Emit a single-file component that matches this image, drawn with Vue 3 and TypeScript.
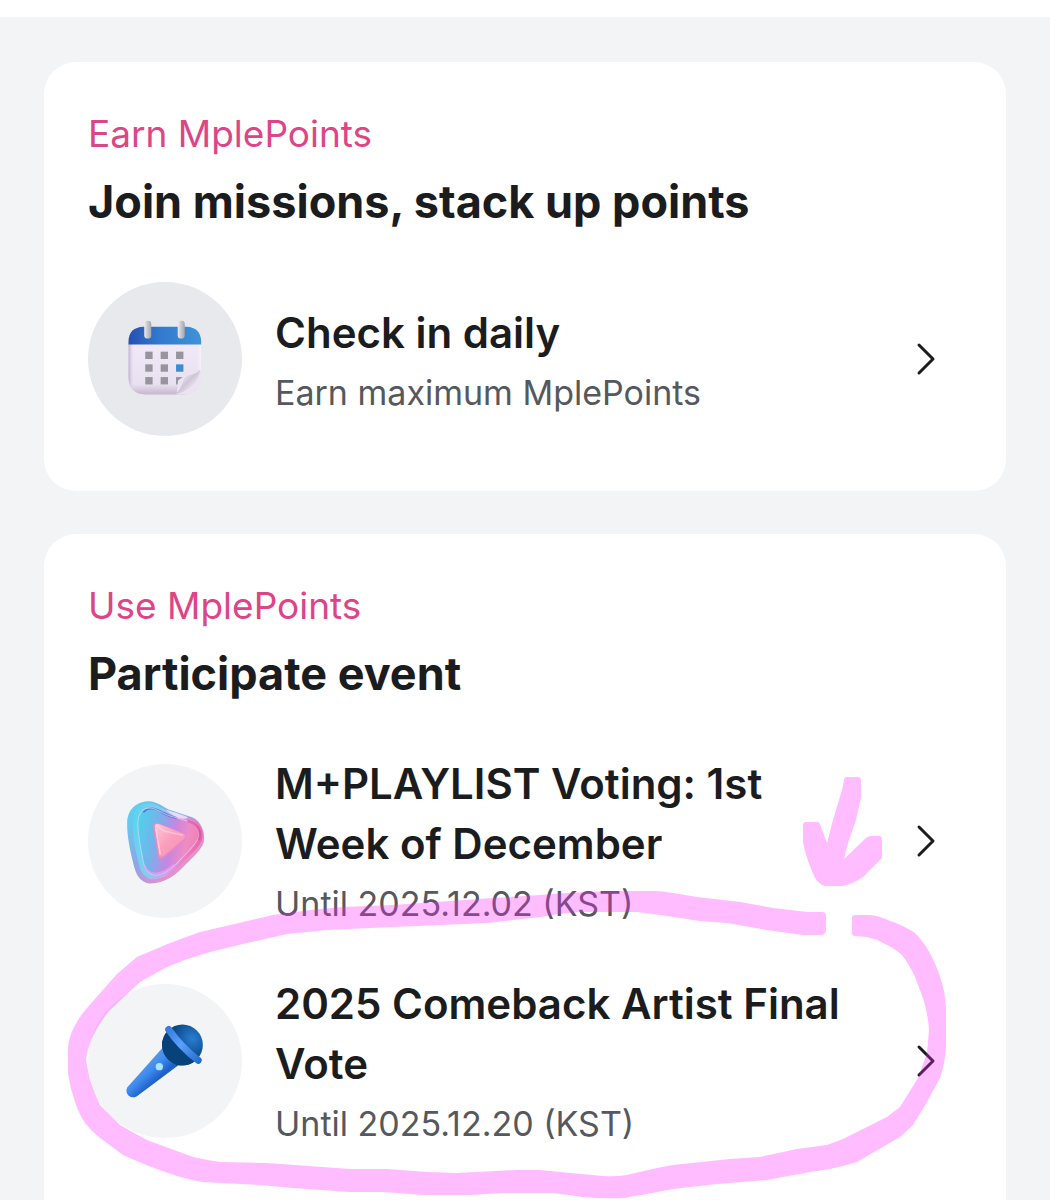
<script setup lang="ts">
type IconName = 'calendar' | 'play' | 'mic'

interface Item {
  icon: IconName
  title: string
  note: string
}

interface Section {
  label: string
  heading: string
  items: Item[]
}

const sections: Section[] = [
  {
    label: 'Earn MplePoints',
    heading: 'Join missions, stack up points',
    items: [{ icon: 'calendar', title: 'Check in daily', note: 'Earn maximum MplePoints' }],
  },
  {
    label: 'Use MplePoints',
    heading: 'Participate event',
    items: [
      { icon: 'play', title: 'M+PLAYLIST Voting: 1st Week of December', note: 'Until 2025.12.02 (KST)' },
      { icon: 'mic', title: '2025 Comeback Artist Final Vote', note: 'Until 2025.12.20 (KST)' },
    ],
  },
]

const columns = [198, 244, 290]
const lines = [244, 282, 320]
</script>

<template>
  <main class="page">
    <section v-for="section in sections" :key="section.label" class="card">
      <p class="label">{{ section.label }}</p>
      <h2 class="heading">{{ section.heading }}</h2>
      <ul class="list">
        <li v-for="item in section.items" :key="item.title">
          <a class="row" href="#">
            <span class="badge" :class="item.icon">
              <svg v-if="item.icon === 'calendar'" viewBox="27 36 460 460" aria-hidden="true">
                <defs>
                  <linearGradient id="cal-top" x1="0" y1="0" x2="1" y2="0">
                    <stop offset="0" stop-color="#2450b4" />
                    <stop offset="0.4" stop-color="#3278cd" />
                    <stop offset="1" stop-color="#3f93d8" />
                  </linearGradient>
                  <linearGradient id="cal-body" x1="0" y1="0" x2="0" y2="1">
                    <stop offset="0" stop-color="#f2e9f8" />
                    <stop offset="0.8" stop-color="#e9e0f0" />
                    <stop offset="1" stop-color="#c5b5cd" />
                  </linearGradient>
                  <linearGradient id="cal-side" x1="0" y1="0" x2="1" y2="0">
                    <stop offset="0" stop-color="#bdb0cc" />
                    <stop offset="0.08" stop-color="#efe6f6" stop-opacity="0" />
                    <stop offset="0.94" stop-color="#efe6f6" stop-opacity="0" />
                    <stop offset="1" stop-color="#f8f4fc" />
                  </linearGradient>
                  <linearGradient id="cal-ring" x1="0" y1="0" x2="1" y2="0">
                    <stop offset="0" stop-color="#eeedf0" />
                    <stop offset="0.45" stop-color="#c9c8cc" />
                    <stop offset="1" stop-color="#a4a5ab" />
                  </linearGradient>
                  <linearGradient id="cal-fold" x1="0" y1="0" x2="1" y2="1">
                    <stop offset="0.2" stop-color="#f2ebf6" />
                    <stop offset="0.5" stop-color="#cfc5d8" />
                    <stop offset="0.75" stop-color="#eee6f3" />
                  </linearGradient>
                </defs>
                <path d="M148 220H364V298L362 326Q360 371 314 372H196Q150 370 148 322Z" fill="url(#cal-body)" />
                <path d="M148 220H364V298L362 326Q360 371 314 372H196Q150 370 148 322Z" fill="url(#cal-side)" />
                <path d="M148 223V212Q150 172 192 170H322Q362 172 365 212V223Z" fill="url(#cal-top)" />
                <rect x="195" y="152" width="21" height="53" rx="10" fill="url(#cal-ring)" />
                <rect x="295" y="152" width="21" height="53" rx="10" fill="url(#cal-ring)" />
                <template v-for="(y, r) in lines" :key="y">
                  <rect
                    v-for="(x, c) in columns"
                    :key="x"
                    :x="x"
                    :y="y"
                    width="22"
                    height="22"
                    :fill="r === 1 && c === 2 ? '#3d8cd0' : '#98949d'"
                  />
                </template>
                <path d="M292 372L296 330L318 314L366 297L364 330Q360 372 316 372Z" fill="#ebe3f1" />
                <path d="M289 371Q304 355 310 336Q314 318 330 314Q352 310 362 297Q358 330 334 350Q312 368 289 371Z" fill="url(#cal-fold)" />
              </svg>

              <svg v-else-if="item.icon === 'play'" viewBox="25 14 460 460" aria-hidden="true">
                <defs>
                  <linearGradient id="play-rim" x1="0" y1="0.35" x2="1" y2="0.6">
                    <stop offset="0" stop-color="#5fd3ee" />
                    <stop offset="0.3" stop-color="#7fcff2" />
                    <stop offset="0.58" stop-color="#d3a2ec" />
                    <stop offset="0.8" stop-color="#f07cbf" />
                    <stop offset="1" stop-color="#ea5f9e" />
                  </linearGradient>
                  <linearGradient id="play-depth" x1="0" y1="0" x2="1" y2="1">
                    <stop offset="0" stop-color="#55d8ee" />
                    <stop offset="0.45" stop-color="#8fa5e8" />
                    <stop offset="0.7" stop-color="#e08fce" />
                    <stop offset="1" stop-color="#f0a3cc" />
                  </linearGradient>
                  <linearGradient id="play-face" x1="0" y1="0.3" x2="1" y2="0.55">
                    <stop offset="0" stop-color="#4fd0ec" />
                    <stop offset="0.3" stop-color="#78b1ea" />
                    <stop offset="0.58" stop-color="#c985e2" />
                    <stop offset="0.8" stop-color="#f08bc4" />
                    <stop offset="1" stop-color="#f17eb2" />
                  </linearGradient>
                  <linearGradient id="play-mark" x1="0" y1="0" x2="1" y2="1">
                    <stop offset="0" stop-color="#ffc7dc" />
                    <stop offset="0.5" stop-color="#fb9dbb" />
                    <stop offset="1" stop-color="#f48fc0" />
                  </linearGradient>
                </defs>
                <path d="M142 190C143 145 174 125 208 125C230 126 248 140 266 150L338 174C363 185 376 220 371 246C365 268 342 289 318 313C285 348 254 372 208 371C180 367 168 346 160 310C150 270 141 225 142 190Z" fill="url(#play-depth)" />
                <path d="M158 190C158 147 183 130 212 132C235 136 248 149 270 157L336 178C360 188 371 213 366 238C358 263 335 280 313 303C278 340 248 361 211 358C185 350 179 325 173 298C164 260 158 222 158 190Z" fill="url(#play-rim)" />
                <path d="M174 193C174 157 192 142 216 146C238 151 254 166 276 171L324 185C349 193 360 215 354 236C345 258 322 276 302 299C273 331 246 350 218 345C196 338 191 314 187 290C180 254 174 222 174 193Z" fill="url(#play-face)" />
                <path d="M190 158C205 140 230 147 250 160C264 168 276 172 290 176" fill="none" stroke="#4c69c7" stroke-width="7" opacity="0.7" />
                <path d="M174 193C174 157 192 142 216 146C238 151 254 166 276 171L324 185C349 193 360 215 354 236C345 258 322 276 302 299C273 331 246 350 218 345C196 338 191 314 187 290C180 254 174 222 174 193Z" fill="none" stroke="#d9dcff" stroke-width="3" opacity="0.65" />
                <path d="M256 150C282 158 307 164 324 174C310 184 280 172 256 150Z" fill="#fff" opacity="0.6" />
                <path d="M322 184C353 193 366 215 356 241" fill="none" stroke="#d94b9d" stroke-width="7" opacity="0.65" />
                <path d="M194 318C206 350 244 348 282 314" fill="none" stroke="#ec9cf2" stroke-width="6" opacity="0.7" />
                <path d="M219 202Q222 187 237 192L309 222Q327 231 314 242L249 296Q238 302 234 288Z" fill="#ec88bb" />
                <path d="M224 199Q226 190 238 194L308 221Q322 229 311 238L251 288Q239 296 237 284Z" fill="url(#play-mark)" />
                <path d="M230 198L252 214L309 227" fill="none" stroke="#ffe2ed" stroke-width="5" opacity="0.5" />
                <path d="M228 206L241 284" stroke="#ffd0e2" stroke-width="4" />
              </svg>

              <svg v-else viewBox="86 45 460 460" aria-hidden="true">
                <defs>
                  <linearGradient id="mic-handle" gradientUnits="userSpaceOnUse" x1="248" y1="290" x2="288" y2="334">
                    <stop offset="0" stop-color="#5799e8" />
                    <stop offset="0.45" stop-color="#3e8bf0" />
                    <stop offset="1" stop-color="#1f61c8" />
                  </linearGradient>
                  <radialGradient id="mic-head" gradientUnits="userSpaceOnUse" cx="398" cy="208" r="78">
                    <stop offset="0" stop-color="#2b7dd0" />
                    <stop offset="0.55" stop-color="#12579f" />
                    <stop offset="1" stop-color="#083768" />
                  </radialGradient>
                  <linearGradient id="mic-band" gradientUnits="userSpaceOnUse" x1="322" y1="177" x2="420" y2="278">
                    <stop offset="0" stop-color="#347bdf" />
                    <stop offset="0.45" stop-color="#5ca0fa" />
                    <stop offset="1" stop-color="#226bce" />
                  </linearGradient>
                </defs>
                <path d="M308 236L356 288L232 380Q218 388 207 378Q197 368 203 354Z" fill="url(#mic-handle)" />
                <circle cx="368" cy="227" r="61" fill="url(#mic-head)" />
                <path d="M322 188Q354 239 408 274Q380 295 349 286Q308 267 307 219Z" fill="#07427b" />
                <path d="M327 181Q362 232 415 273" fill="none" stroke="url(#mic-band)" stroke-width="21" stroke-linecap="round" />
                <circle cx="299" cy="292" r="11" fill="#a9e4ff" />
              </svg>
            </span>

            <span class="text">
              <strong class="title">{{ item.title }}</strong>
              <span class="note">{{ item.note }}</span>
            </span>

            <svg class="chevron" viewBox="0 0 72 36" aria-hidden="true">
              <path d="M29 4L43 18L29 32" />
            </svg>
          </a>
        </li>
      </ul>
    </section>

    <!-- Highlighter marks over the second card -->
    <svg class="marker" viewBox="0 0 1050 1200" aria-hidden="true">
      <path d="M847 777H858Q861 777 861 781V798L856 820L848 843L844 859L866 838Q868 836 871 836H879Q882 836 882 840V858L863 877Q853 884 842 886H825Q820 885 815 878Q807 861 803 843V825Q803 822 806 822H817Q820 822 821 827L827 843L833 820L842 790L844 780Q844 777 847 777Z" />
      <path
        d="M822 912H807L773 908L740 902L697 897L673 893Q663 891 653 891H630Q585 891 540 895L493 898L393 905L343 907L310 910L273 915L200 932L170 943L137 957L117 974L87 1008Q75 1022 70 1037Q68 1043 68 1050V1073Q70 1088 75 1102Q79 1114 85 1123Q92 1132 100 1138L123 1155Q149 1167 177 1176Q190 1180 203 1182L260 1185L293 1188L350 1192H383L423 1195H470L503 1193H553L583 1197Q603 1199 623 1198L647 1194L673 1189L717 1184L767 1180L810 1172L830 1169Q844 1166 857 1162L900 1137L913 1125L927 1102L940 1078Q945 1063 946 1047V1013Q946 998 942 983Q938 969 932 957Q925 943 915 933Q903 925 890 921Q880 916 870 915H855Q852 915 852 918V933Q852 936 855 936L867 937Q876 939 883 943Q894 948 902 955Q909 964 915 977L923 998Q928 1014 929 1030L927 1053L918 1078L900 1107L887 1117L843 1139L827 1145L797 1149L760 1157L730 1159L673 1165L657 1168L627 1175Q615 1177 603 1176L570 1173L540 1170H517L457 1173L427 1172L387 1169H350L267 1163L220 1162Q206 1160 193 1157L147 1140Q132 1132 120 1125L100 1105Q94 1092 90 1080L86 1060Q87 1050 92 1038Q99 1023 110 1010L140 982L167 967Q188 958 210 952L247 943L287 934L327 930L393 927L487 923L540 917Q560 913 580 912H637L660 915L700 921L727 923L767 930L803 935H822Q826 934 826 930V916Q826 912 822 912Z"
      />
    </svg>
  </main>
</template>

<style>
body {
  margin: 0;
  background: #f2f4f6;
}
</style>

<style scoped>
.page {
  position: relative;
  box-sizing: border-box;
  height: 100vh;
  overflow: hidden;
  display: flex;
  flex-direction: column;
  gap: 43px;
  padding: 45px 44px 0;
  border-top: 17px solid #fff;
  background: #f2f4f6;
  font-family: Inter, 'Liberation Sans', sans-serif;
  color: #1b1c1e;
}

.card {
  flex: none;
  padding: 44px 44px 55px;
  border-radius: 32px;
  background: #fff;
}

.card:nth-of-type(2) {
  padding-bottom: 96px;
}

.label {
  margin: 0;
  font-size: 37px;
  line-height: 56px;
  color: #dd4587;
}

.heading {
  margin: 8px 0 48px;
  font-size: 45px;
  line-height: 64px;
  font-weight: 700;
}

.list {
  display: flex;
  flex-direction: column;
  gap: 47px;
  margin: 0;
  padding: 0;
  list-style: none;
}

.row {
  display: flex;
  align-items: center;
  color: inherit;
  text-decoration: none;
}

.badge {
  flex: none;
  width: 154px;
  height: 154px;
  margin-right: 33px;
  border-radius: 50%;
  background: #f2f4f6;
}

.badge.calendar {
  background: #e8e9ed;
}

.badge svg {
  display: block;
  width: 100%;
  height: 100%;
}

.text {
  flex: 1;
  min-width: 0;
  display: flex;
  flex-direction: column;
  gap: 7px;
  padding-right: 24px;
}

.title {
  font-size: 42px;
  line-height: 60px;
  font-weight: 600;
}

.note {
  font-size: 34px;
  line-height: 46px;
  color: #55585d;
}

.chevron {
  flex: none;
  width: 72px;
  height: 36px;
  fill: none;
  stroke: #1b1c1e;
  stroke-width: 3;
  stroke-linecap: round;
  stroke-linejoin: round;
}

.marker {
  position: absolute;
  top: -17px;
  left: 0;
  width: 100%;
  pointer-events: none;
  fill: #ff26ff;
  opacity: 0.3;
}
</style>
